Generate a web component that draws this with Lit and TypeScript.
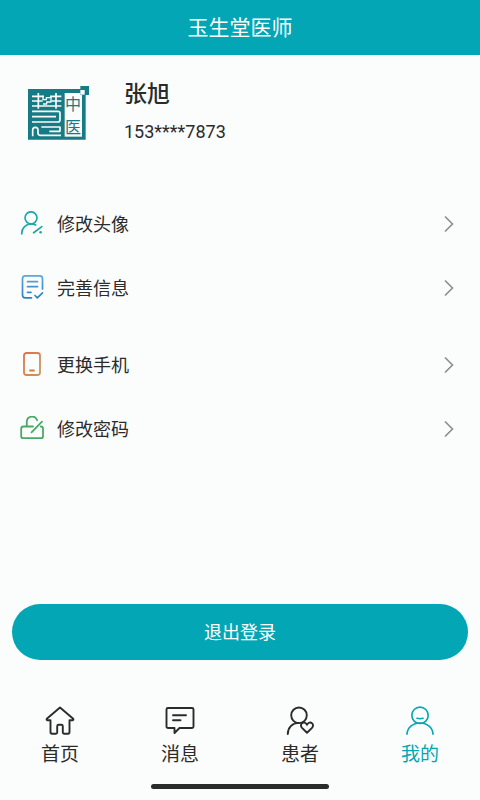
import { LitElement, html, svg, css } from "lit";
import { customElement, property, state } from "lit/decorators.js";
import { classMap } from "lit/directives/class-map.js";

const menuIcons: Record<string, unknown> = {
  avatar: svg`
    <g fill="none" stroke="url(#teal)" stroke-width="1.7" stroke-linecap="round">
      <circle cx="11" cy="6.800" r="6" />
      <path d="M1.700 22.800c0-5.600 3.800-9.600 9.300-9.800 2 0 3.500.3 4.700 1" />
      <path d="M13.600 21.800 21.800 15.600" />
    </g>
    <circle cx="20.600" cy="21.300" r="1.300" fill="#18a9a6" />`,
  info: svg`
    <g fill="none" stroke="url(#blue)" stroke-width="1.700" stroke-linecap="round" stroke-linejoin="round">
      <path d="M11.500 22.800H5.300a2.800 2.800 0 0 1-2.800-2.800V3.500A2.800 2.800 0 0 1 5.300.900h14.400a2.800 2.800 0 0 1 2.800 2.600v10.500" />
      <path d="M7.500 6.700h10M7.500 11.700h10M7.500 17.300h3.500" />
      <path d="m15 20.500 2.300 2.300 5.200-5" />
    </g>`,
  phone: svg`
    <g fill="none" stroke-width="1.800" stroke-linecap="round">
      <rect x="4" y="1" width="16" height="22" rx="2.500" stroke="url(#orange)" />
      <path d="M10 18.500h4" stroke="#cf8048" />
    </g>`,
  lock: svg`
    <g fill="none" stroke="#4aa864" stroke-width="1.800" stroke-linecap="round" stroke-linejoin="round">
      <path d="M13 10.500H3.500a2.300 2.300 0 0 0-2.300 2.300v7.400a2 2 0 0 0 2 2h17.800a2 2 0 0 0 2-2v-7.400c0-1.300-.8-2.300-2.200-2.300" />
      <path d="M6.800 10V6.200a5.300 5.300 0 0 1 10.300-2" />
      <path d="M11.500 16.300 22 5.700" />
    </g>`,
};

const tabIcons: Record<string, unknown> = {
  home: svg`<path d="M15 1.500 1.800 12.700c-.5.900 0 1.500.7 1.500h3V26c0 1.200.7 1.700 1.500 1.700h4c.8 0 1.200-.5 1.200-1.200v-6.300c0-1 .6-1.500 1.400-1.500h2.800c.8 0 1.400.5 1.400 1.500v6.300c0 .7.400 1.200 1.200 1.200h4c.8 0 1.500-.5 1.500-1.700V14.200h3c.7 0 1.200-.6.700-1.500z" />`,
  message: svg`
    <path d="M3 2h24a1.500 1.500 0 0 1 1.500 1.500v17A1.500 1.500 0 0 1 27 22H14.500L9.500 27v-5H3a1.500 1.500 0 0 1-1.500-1.500v-17A1.500 1.500 0 0 1 3 2z" />
    <path d="M8 9.200h13M8 14.200h7.500" />`,
  patient: svg`
    <circle cx="14" cy="9.300" r="7.800" />
    <path d="M2.800 28c0-6.500 4.400-11 10.700-11.100" />
    <path d="M22 26.800l-5-4.900c-1.500-1.600-1.300-3.700 0-4.700 1.600-1.300 3.800-.6 5 1.500 1.200-2.100 3.400-2.800 5-1.500 1.300 1 1.500 3.100 0 4.700z" />`,
  mine: svg`
    <g stroke-width="1.600">
      <circle cx="15" cy="9.300" r="8.200" />
      <path d="M2 28.200c.3-6.400 5.700-11.200 13-11.200s12.700 4.800 13 11.200" />
      <path d="M12 12.300c1.800.5 4.300.5 6 0" />
    </g>`,
};

@customElement("menu-row")
class MenuRow extends LitElement {
  @property() label = "";
  @property() icon = "";

  static styles = css`
    :host {
      display: block;
    }
    .row {
      display: flex;
      align-items: center;
      gap: 13px;
      width: 100%;
      height: 64px;
      padding: 0 25px 0 20px;
      border: 0;
      background: none;
      color: #2b2b2b;
      font: 18px/24px "Noto Sans CJK SC", sans-serif;
      text-align: left;
      cursor: pointer;
      box-sizing: border-box;
    }
    .icon,
    .label {
      margin-bottom: 2px;
    }
    .icon {
      flex: none;
      width: 24px;
      height: 24px;
    }
    .label {
      flex: 1;
    }
    .chevron {
      flex: none;
      width: 12px;
      height: 18px;
    }
  `;

  render() {
    return html`
      <button class="row" type="button">
        <svg class="icon" viewBox="0 0 24 24" aria-hidden="true">
          <defs>
            <linearGradient id="teal" gradientUnits="userSpaceOnUse" x1="0" y1="0" x2="24" y2="24">
              <stop offset="0" stop-color="#2ba7b4" />
              <stop offset="1" stop-color="#10a99d" />
            </linearGradient>
            <linearGradient id="blue" gradientUnits="userSpaceOnUse" x1="0" y1="0" x2="0" y2="24">
              <stop offset="0" stop-color="#62a7dc" />
              <stop offset="1" stop-color="#2381c0" />
            </linearGradient>
            <linearGradient id="orange" x1="0" y1="0" x2="1" y2="1">
              <stop offset="0" stop-color="#e5713f" />
              <stop offset="1" stop-color="#c59a63" />
            </linearGradient>
          </defs>
          ${menuIcons[this.icon]}
        </svg>
        <span class="label">${this.label}</span>
        <svg class="chevron" viewBox="0 0 12 18" aria-hidden="true">
          <path d="M2 1.500 9.500 9 2 16.500" fill="none" stroke="#8c8c8c" stroke-width="1.600" />
        </svg>
      </button>
    `;
  }
}

@customElement("app-root")
class AppRoot extends LitElement {
  @state() private active = "mine";

  private groups = [
    [
      { icon: "avatar", label: "修改头像" },
      { icon: "info", label: "完善信息" },
    ],
    [
      { icon: "phone", label: "更换手机" },
      { icon: "lock", label: "修改密码" },
    ],
  ];

  private tabs = [
    { id: "home", label: "首页" },
    { id: "message", label: "消息" },
    { id: "patient", label: "患者" },
    { id: "mine", label: "我的" },
  ];

  static styles = css`
    :host {
      display: flex;
      flex-direction: column;
      min-height: 100vh;
      background: #fbfdfc;
      color: #2b2b2b;
      font-family: Roboto, "Noto Sans CJK SC", sans-serif;
    }
    .header {
      display: flex;
      align-items: center;
      justify-content: center;
      height: 55px;
      background: #03a6b4;
      color: #fff;
    }
    .title {
      margin: 0;
      font-size: 21px;
      line-height: 28px;
      font-weight: 400;
    }
    .content {
      flex: 1;
      display: flex;
      flex-direction: column;
    }
    .profile {
      display: flex;
      gap: 35px;
      height: 111px;
      padding: 26px 28px 0;
    }
    .seal {
      flex: none;
      width: 61px;
      height: 54px;
      margin-top: 5px;
    }
    .seal-text {
      font-family: "Noto Sans CJK SC", sans-serif;
      font-size: 48px;
      font-weight: 400;
    }
    .name {
      margin: 0 0 11px;
      font-size: 23px;
      line-height: 28px;
      font-weight: 500;
    }
    .phone {
      margin: 0;
      font-size: 18px;
      line-height: 24px;
    }
    .groups {
      display: flex;
      flex-direction: column;
      gap: 13px;
    }
    .logout {
      height: 56px;
      margin: auto 12px 0;
      padding: 0 0 2px;
      border: 0;
      border-radius: 28px;
      background: #03a6b4;
      color: #fff;
      font: 18px/24px "Noto Sans CJK SC", sans-serif;
      cursor: pointer;
    }
    .tabs {
      display: grid;
      grid-template-columns: repeat(4, 1fr);
      padding-top: 46px;
    }
    .tab {
      display: flex;
      flex-direction: column;
      align-items: center;
      gap: 5px;
      padding: 0;
      border: 0;
      background: none;
      color: #2b2b2b;
      font: 19px/24px "Noto Sans CJK SC", sans-serif;
      cursor: pointer;
    }
    .tab.active {
      color: #03a6b4;
    }
    .tab-icon {
      width: 30px;
      height: 30px;
      fill: none;
      stroke: currentColor;
      stroke-width: 1.9;
      stroke-linecap: round;
      stroke-linejoin: round;
    }
    .home-bar {
      align-self: center;
      width: 37%;
      height: 5px;
      margin: 19px 0 11px;
      border-radius: 3px;
      background: #2b2b2b;
    }
  `;

  render() {
    return html`
      <header class="header"><h1 class="title">玉生堂医师</h1></header>
      <main class="content">
        <section class="profile">
          <svg class="seal" viewBox="84 258 183 162" role="img" aria-label="中医">
            <path d="M84 267h173v152H84z" fill="#177b85" />
            <path d="M194 279h52v131h-52z" fill="#fbfdfc" />
            <path d="M241 258h26v27h-26z" fill="#177b85" />
            <path d="M241 270h13v14h-13z" fill="#fbfdfc" />
            <g fill="none" stroke="#fbfdfc" stroke-width="5" stroke-linejoin="round">
              <path d="M96 289h36M96 303h32M96 318h88M150 289h34M154 303h30M115 279v47M168 279v47" />
              <path d="M129 287v12h10v-6h14M153 289v17h-13v6h-11" stroke-width="4" />
              <path d="M96 334h78q6 0 6 6v20q0 6-6 6H96M96 350h72" />
              <path d="M98 409v-19q0-8 8-8t8 8v9q0 7 7 7h62M124 381h56v13h-32" />
            </g>
            <text class="seal-text" x="195" y="331" fill="#177b85">中</text>
            <text class="seal-text" x="195" y="398" fill="#177b85">医</text>
          </svg>
          <div>
            <h2 class="name">张旭</h2>
            <p class="phone">153****7873</p>
          </div>
        </section>
        <div class="groups">
          ${this.groups.map(
            (rows) => html`<div>
              ${rows.map((r) => html`<menu-row .icon=${r.icon} .label=${r.label}></menu-row>`)}
            </div>`
          )}
        </div>
        <button class="logout" type="button">退出登录</button>
      </main>
      <nav class="tabs">
        ${this.tabs.map(
          (t) => html`<button
            type="button"
            class=${classMap({ tab: true, active: this.active === t.id })}
            @click=${() => (this.active = t.id)}
          >
            <svg class="tab-icon" viewBox="0 0 30 30" aria-hidden="true">${tabIcons[t.id]}</svg>
            <span>${t.label}</span>
          </button>`
        )}
      </nav>
      <div class="home-bar"></div>
    `;
  }
}
